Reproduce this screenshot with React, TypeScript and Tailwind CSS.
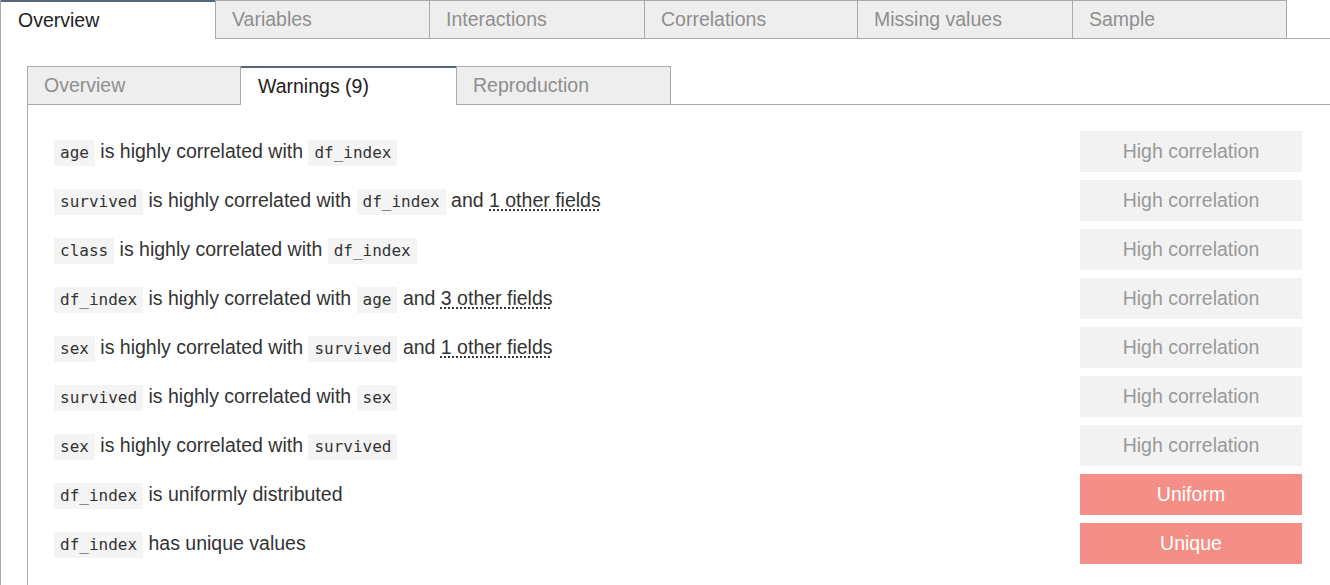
import React from "react";

const sans = { fontFamily: '"Liberation Sans", Arial, sans-serif' };

function Code({ children }: { children: React.ReactNode }) {
  return (
    <span className="inline-block bg-[#f4f4f4] px-[6px] leading-[26px] text-[16px] text-[#333] [font-family:'DejaVu_Sans_Mono',monospace] align-middle">
      {children}
    </span>
  );
}

function More({ children }: { children: React.ReactNode }) {
  return <span className="underline decoration-dotted underline-offset-[3px]">{children}</span>;
}

type Row = { text: React.ReactNode; badge: string; alert?: boolean };

const rows: Row[] = [
  { text: <><Code>age</Code> is highly correlated with <Code>df_index</Code></>, badge: "High correlation" },
  { text: <><Code>survived</Code> is highly correlated with <Code>df_index</Code> and <More>1 other fields</More></>, badge: "High correlation" },
  { text: <><Code>class</Code> is highly correlated with <Code>df_index</Code></>, badge: "High correlation" },
  { text: <><Code>df_index</Code> is highly correlated with <Code>age</Code> and <More>3 other fields</More></>, badge: "High correlation" },
  { text: <><Code>sex</Code> is highly correlated with <Code>survived</Code> and <More>1 other fields</More></>, badge: "High correlation" },
  { text: <><Code>survived</Code> is highly correlated with <Code>sex</Code></>, badge: "High correlation" },
  { text: <><Code>sex</Code> is highly correlated with <Code>survived</Code></>, badge: "High correlation" },
  { text: <><Code>df_index</Code> is uniformly distributed</>, badge: "Uniform", alert: true },
  { text: <><Code>df_index</Code> has unique values</>, badge: "Unique", alert: true },
];

function ActiveTab({ label, w }: { label: string; w: string }) {
  return (
    <div className={`${w} h-[39px] shrink-0 border-t-2 border-[#56677a] bg-white pl-[17px] flex items-center text-[19.5px] text-[#222]`}>
      {label}
    </div>
  );
}

function Tab({ label, w, first }: { label: string; w: string; first?: boolean }) {
  return (
    <div
      className={`${w} h-[39px] shrink-0 border border-[#aaa] ${first ? "" : "border-l-0"} bg-[#eeeeee] pl-[16px] flex items-center text-[19.5px] text-[#8e8e8e]`}
    >
      {label}
    </div>
  );
}

export default function App() {
  return (
    <div className="w-[1330px] h-[585px] overflow-hidden bg-white" style={sans}>
      <div className="h-[585px] border-l border-[#aaa]">
        <div className="flex">
          <ActiveTab label="Overview" w="w-[214px]" />
          <Tab label="Variables" w="w-[215px]" first />
          <Tab label="Interactions" w="w-[215px]" />
          <Tab label="Correlations" w="w-[213px]" />
          <Tab label="Missing values" w="w-[215px]" />
          <Tab label="Sample" w="w-[214px]" />
          <div className="flex-1 h-[39px] border-b border-[#aaa]" />
        </div>
        <div className="pl-[26px] pt-[27px]">
          <div className="flex">
            <Tab label="Overview" w="w-[214px]" first />
            <ActiveTab label="Warnings (9)" w="w-[215px]" />
            <Tab label="Reproduction" w="w-[215px]" first />
            <div className="flex-1 h-[39px] border-b border-[#aaa]" />
          </div>
          <div className="border-l border-[#aaa] h-[480px] pl-[26px] pr-[28px] pt-[26px] flex flex-col gap-[8px]">
            {rows.map((r, i) => (
              <div key={i} className="h-[41px] flex items-center justify-between">
                <div className="text-[19.5px] text-[#333] whitespace-pre">{r.text}</div>
                <div
                  className={`w-[222px] h-[41px] flex items-center justify-center text-[19.5px] ${
                    r.alert ? "bg-[#f48f88] text-white" : "bg-[#f2f2f2] text-[#999]"
                  }`}
                >
                  {r.badge}
                </div>
              </div>
            ))}
          </div>
        </div>
      </div>
    </div>
  );
}
